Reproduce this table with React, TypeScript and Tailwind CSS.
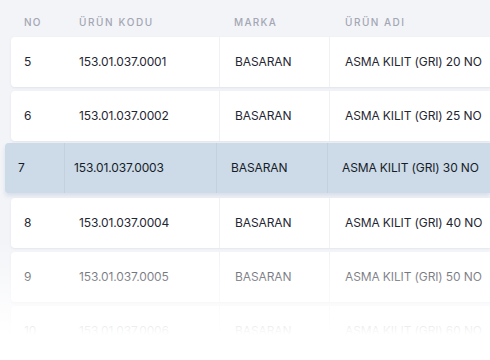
import React from 'react';

const ROWS = [
  { no: 5, code: '153.01.037.0001', brand: 'BASARAN', name: 'ASMA KILIT (GRI) 20 NO' },
  { no: 6, code: '153.01.037.0002', brand: 'BASARAN', name: 'ASMA KILIT (GRI) 25 NO' },
  { no: 7, code: '153.01.037.0003', brand: 'BASARAN', name: 'ASMA KILIT (GRI) 30 NO', active: true },
  { no: 8, code: '153.01.037.0004', brand: 'BASARAN', name: 'ASMA KILIT (GRI) 40 NO' },
  { no: 9, code: '153.01.037.0005', brand: 'BASARAN', name: 'ASMA KILIT (GRI) 50 NO' },
  { no: 10, code: '153.01.037.0006', brand: 'BASARAN', name: 'ASMA KILIT (GRI) 60 NO' },
];

export default function App() {
  return (
    <div
      className="relative w-[490px] h-[360px] overflow-hidden bg-[#f3f4f8] text-[#1f2733]"
      style={{ fontFamily: 'Inter, "Noto Sans", sans-serif' }}
    >
      {/* Header */}
      <div className="flex items-center h-[37px] pt-[7px] pl-[11px] text-[10px] font-medium tracking-[0.13em] text-[#a3a7b3]">
        <div className="w-[55px] pl-[13px]">NO</div>
        <div className="w-[154px] pl-[13px] tracking-[0.16em]">ÜRÜN KODU</div>
        <div className="w-[110px] pl-[14px]">MARKA</div>
        <div className="flex-1 pl-[15px] tracking-[0.15em]">ÜRÜN ADI</div>
      </div>

      {/* Rows */}
      <div className="flex flex-col gap-[4px]">
        {ROWS.map(r =>
          r.active ? (
            <div
              key={r.no}
              className="flex items-center h-[50px] ml-[5px] -mt-[2px] mb-[1px] rounded-l-[4px] bg-[#cddae7] text-[12px] tracking-[-0.01em] text-[#161d29] shadow-[0_3px_4px_rgba(180,195,215,0.45)]"
            >
              <div className="w-[60px] h-full flex items-center pl-[13px] border-r border-[#c3d0de]">{r.no}</div>
              <div className="w-[152px] h-full flex items-center pl-[9px] border-r border-[#c3d0de]">{r.code}</div>
              <div className="w-[111px] h-full flex items-center pl-[14px] border-r border-[#c3d0de]">{r.brand}</div>
              <div className="flex-1 h-full flex items-center pl-[14px]">{r.name}</div>
            </div>
          ) : (
            <div
              key={r.no}
              className="flex items-center h-[50px] ml-[11px] rounded-l-[4px] bg-white text-[12px] tracking-[-0.01em] shadow-[0_1px_2px_rgba(210,214,228,0.5)]"
            >
              <div className="w-[55px] h-full flex items-center pl-[13px]">{r.no}</div>
              <div className="w-[154px] h-full flex items-center pl-[13px] border-r border-[#f0f1f4]">{r.code}</div>
              <div className="w-[110px] h-full flex items-center pl-[15px] border-r border-[#f0f1f4]">{r.brand}</div>
              <div className="flex-1 h-full flex items-center pl-[15px]">{r.name}</div>
            </div>
          )
        )}
      </div>

      {/* Bottom fade */}
      <div className="absolute left-0 right-0 top-[240px] h-[95px] bg-gradient-to-b from-white/0 via-white/55 to-white" />
      <div className="absolute left-0 right-0 top-[335px] bottom-0 bg-white" />
    </div>
  );
}
